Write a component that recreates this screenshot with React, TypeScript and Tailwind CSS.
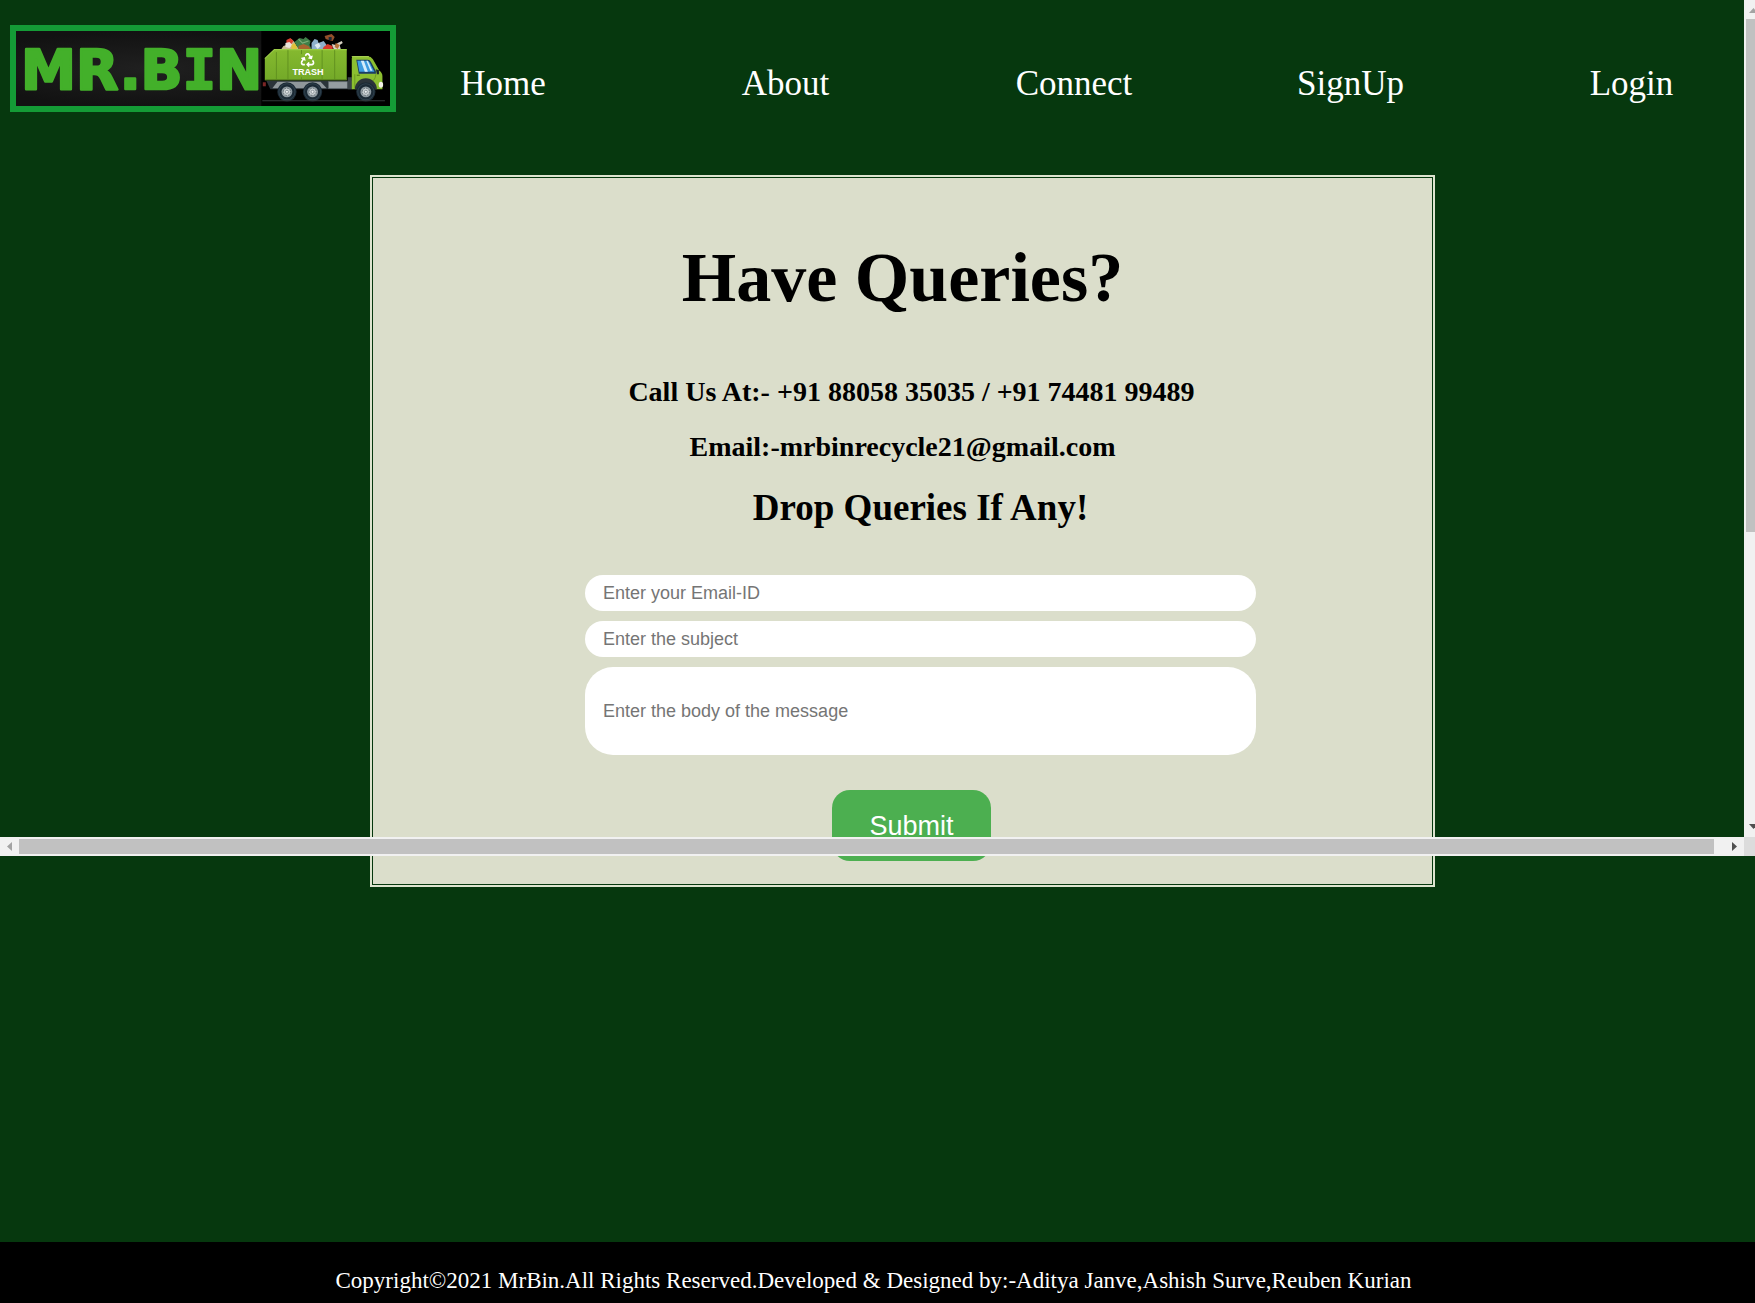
import { FaRecycle } from "react-icons/fa";

const SERIF = "font-['Liberation_Serif','Times_New_Roman',serif]";
const SANS = "font-['Liberation_Sans',Arial,sans-serif]";

const links = ["Home", "About", "Connect", "SignUp", "Login"];

function Wheel({ cx }: { cx: number }) {
  return (
    <g>
      <circle cx={cx} cy={91.5} r={9.6} fill="#1b2a35" />
      <circle cx={cx} cy={91.5} r={8} fill="none" stroke="#2f404c" strokeWidth={1} />
      <circle cx={cx} cy={91.5} r={5.4} fill="#8e9aa0" />
      <circle cx={cx} cy={91.5} r={3.6} fill="#c9d0d2" stroke="#5d686e" strokeWidth={0.9} strokeDasharray="1.6 1.2" />
      <circle cx={cx} cy={91.5} r={1.5} fill="#eef1f1" stroke="#66727a" strokeWidth={0.6} />
    </g>
  );
}

function Logo() {
  return (
    <svg viewBox="17 31 372 75" className="block w-full" role="img" aria-label="Mr.Bin">
      <defs>
        <radialGradient id="panel" cx="0.35" cy="0.5" r="0.5">
          <stop offset="0" stopColor="#202020" />
          <stop offset="1" stopColor="#121212" />
        </radialGradient>
        <linearGradient id="tank" x1="0" y1="0" x2="0" y2="1">
          <stop offset="0" stopColor="#85b92f" />
          <stop offset="1" stopColor="#73a928" />
        </linearGradient>
      </defs>
      <rect x={17} y={31} width={372} height={75} fill="url(#panel)" />
      <text
        x={22}
        y={89}
        fontSize={55}
        fontWeight={700}
        fontFamily="'DejaVu Sans', sans-serif"
        fill="#43b02a"
        stroke="#43b02a"
        strokeWidth={2.4}
        strokeLinejoin="round"
      >
        MR.B<tspan fontFamily="'DejaVu Sans Mono', monospace">I</tspan>N
      </text>
      <rect x={261} y={31} width={128} height={75} fill="#000" />

      {/* heap of rubbish */}
      <path d="M281 49l2-3 3-1 1-5 4-1 3 3 2 4 4 3z" fill="#c9b98f" />
      <path d="M286 40l4-2 3 3-2 3-5 0z" fill="#d8402f" />
      <path d="M285 43l4-1 3 3-3 3-4-1z" fill="#e9e4da" />
      <path d="M291 45l3-2 3 4-1 2-5 0z" fill="#e0c23a" />
      <path d="M294 42l5-4 4 1 2-2 5 4-1 4 2 4-13 0z" fill="#3f7f48" />
      <path d="M298 39l4 4 6-2" stroke="#7fb07a" strokeWidth={1} fill="none" />
      <path d="M298 46l5-2 5 2 2 3-12 0z" fill="#a8652f" />
      <path d="M311 43l3-4 3 1 1 3 5-2 3 4-2 4-13 0z" fill="#8fb0cc" />
      <path d="M314 45l4-2 2 3-3 3z" fill="#dfe9f0" />
      <path d="M324 36l7-2 3 3-2 4-4-1-3-1z" fill="#93502b" />
      <path d="M328 37l3 0 0 3-3 0z" fill="#1a2a3a" />
      <path d="M323 47l4-3 5 2 0 3-10 0z" fill="#d93a2c" />
      <path d="M331 44l4 1 2-2 4-2 1 2-3 2 1 4-7 0z" fill="#d8d2c4" />
      <path d="M335 43l4 2-2 4-3-2z" fill="#b7733b" />

      {/* tank */}
      <path d="M264.500 80V58.500L274 49.500H346V80z" fill="url(#tank)" />
      <path d="M264.500 58.500L274 49.500H346" stroke="#9bcb46" strokeWidth={1.2} fill="none" />
      <path d="M276 52V79M287.500 50V79M301 50V54M301 77V79M321.500 50V79M334 50V79" stroke="#5f8f1f" strokeWidth={0.9} />
      <path d="M265 79.500H346" stroke="#557f1c" strokeWidth={1.2} />
      <FaRecycle x={300} y={53} size={14} color="#fff" />
      <text x={292} y={74.500} fontSize={9} fontWeight={700} fontFamily="'Liberation Sans', Arial, sans-serif" fill="#fff">
        TRASH
      </text>

      {/* chassis */}
      <path d="M266 80.500H352V89H270z" fill="#2b343a" />
      <rect x={262.500} y={82} width={3} height={4} fill="#7c2525" />
      <path d="M272 88l5-6.500H320l6 6.500z" fill="#8f979b" />
      <rect x={328} y={81.500} width={18.500} height={6.500} fill="#959da1" stroke="#6b7478" strokeWidth={0.6} />
      <rect x={347} y={77} width={4} height={12} fill="#3c454a" />

      {/* cab */}
      <path d="M351 89V58q0-2 2-2H367q3 0 5 3l6.500 11.500q3 2 3 5.500V89z" fill="#8cbf30" />
      <path d="M351 56.500H368" stroke="#b0d85a" strokeWidth={1} />
      <path d="M355.500 59.500H367q2 0 3 2l5 9.500v2.500H358z" fill="#1d3d63" />
      <path d="M356.500 60.500H366.500q1.500 0 2.500 2l4.500 9H358.500z" fill="#3d9be0" />
      <path d="M360 60.500h3l4 11h-3zM365.500 60.500h1.500l4.500 10h-2z" fill="#d3ecfb" />
      <path d="M354 74V88M375 74q-1 8-6 7H362" stroke="#64941f" strokeWidth={0.8} fill="none" />
      <rect x={356} y={74.500} width={3} height={1} fill="#4f7418" />
      <path d="M375 69l3 1 0 4-2 0z" fill="#1c262c" />
      <ellipse cx={380} cy={84.500} rx={2.200} ry={3} fill="#f3f3e6" />
      <path d="M354 89a11 11 0 0 1 22 0z" fill="#2b343a" />
      <Wheel cx={286.500} />
      <Wheel cx={312} />
      <Wheel cx={365} />
      <path d="M262 100.500H384" stroke="#33383b" strokeWidth={1} />
    </svg>
  );
}

function ScrollBars() {
  return (
    <div className="pointer-events-none absolute inset-x-0 top-0 flex h-[856px] flex-col overflow-hidden" aria-hidden="true">
      <div className="-mr-2 flex w-[19px] flex-1 flex-col items-center self-end bg-[#f1f1f1]">
        <svg width="19" height="19" viewBox="0 0 19 19"><path d="M5 13l4.500-5 4.500 5z" fill="#a3a3a3" /></svg>
        <div className="h-[513px] w-[15px] bg-[#c1c1c1]" />
        <svg className="mt-auto" width="19" height="19" viewBox="0 0 19 19"><path d="M5 6l4.500 5 4.500-5z" fill="#505050" /></svg>
      </div>
      <div className="flex h-[19px] items-center bg-[#f1f1f1]">
        <svg width="19" height="19" viewBox="0 0 19 19"><path d="M12 5l-5 4.500 5 4.500z" fill="#a3a3a3" /></svg>
        <div className="h-[15px] flex-1 bg-[#c1c1c1]" />
        <svg className="ml-[11px]" width="19" height="19" viewBox="0 0 19 19"><path d="M7 5l5 4.500-5 4.500z" fill="#505050" /></svg>
        <div className="h-full w-[11px] bg-[#dcdcdc]" />
      </div>
    </div>
  );
}

export default function App() {
  const field =
    "block w-full bg-white px-[18px] text-[18px] text-black outline-none placeholder:text-[#757575] " + SANS;
  return (
    <div className={"relative flex min-h-screen flex-col bg-[#06380e] text-black " + SERIF}>
      <header className="flex items-start pt-[25px] pr-1.5 pl-2.5">
        <a href="#home" className="w-[386px] shrink-0 border-[6px] border-[#149b36]">
          <Logo />
        </a>
        <nav className="mt-[39px] grid flex-1 grid-cols-[214fr_351fr_226fr_327fr_235fr] text-center text-[35px] leading-10 text-white">
          {links.map((l) => (
            <a key={l} href={"#" + l.toLowerCase()}>{l}</a>
          ))}
        </nav>
      </header>

      <main className="mt-[63px] mr-[320px] ml-[370px] border-2 border-[#dde4cf] bg-[#06380e] p-px">
        <div className="bg-[#dbdecb] px-[212px] pt-[60px] pb-[23px] text-center font-bold">
          <h1 className="text-[70px] leading-20">Have Queries?</h1>
          <h2 className="mt-[58px] -mr-[18px] text-[28px] leading-8 whitespace-nowrap">Call Us At:- +91 88058 35035 / +91 74481 99489</h2>
          <h2 className="mt-[23px] text-[28px] leading-8">Email:-mrbinrecycle21@gmail.com</h2>
          <form className="-mr-[36px] mt-[25px]" onSubmit={(e) => e.preventDefault()}>
            <h3 className="text-[37px] leading-10">Drop Queries If Any!</h3>
            <div className="mt-[47px] flex flex-col gap-2.5 font-normal">
              <input type="email" aria-label="Email-ID" placeholder="Enter your Email-ID" className={field + " h-9 rounded-[18px]"} />
              <input type="text" aria-label="Subject" placeholder="Enter the subject" className={field + " h-9 rounded-[18px]"} />
              <input type="text" aria-label="Message" placeholder="Enter the body of the message" className={field + " h-[88px] rounded-[28px]"} />
            </div>
            <div className="mt-[35px] pr-[18px]">
              <button type="submit" className={"h-[71px] w-[159px] rounded-[18px] bg-[#4caf50] text-[27px] font-normal text-white " + SANS}>
                Submit
              </button>
            </div>
          </form>
        </div>
      </main>

      <footer className="mt-auto bg-black pt-6 pr-2 pb-[7px] text-center text-[23px] leading-[30px] text-white">
        Copyright©2021 MrBin.All Rights Reserved.Developed &amp; Designed by:-Aditya Janve,Ashish Surve,Reuben Kurian
      </footer>

      <ScrollBars />
    </div>
  );
}
